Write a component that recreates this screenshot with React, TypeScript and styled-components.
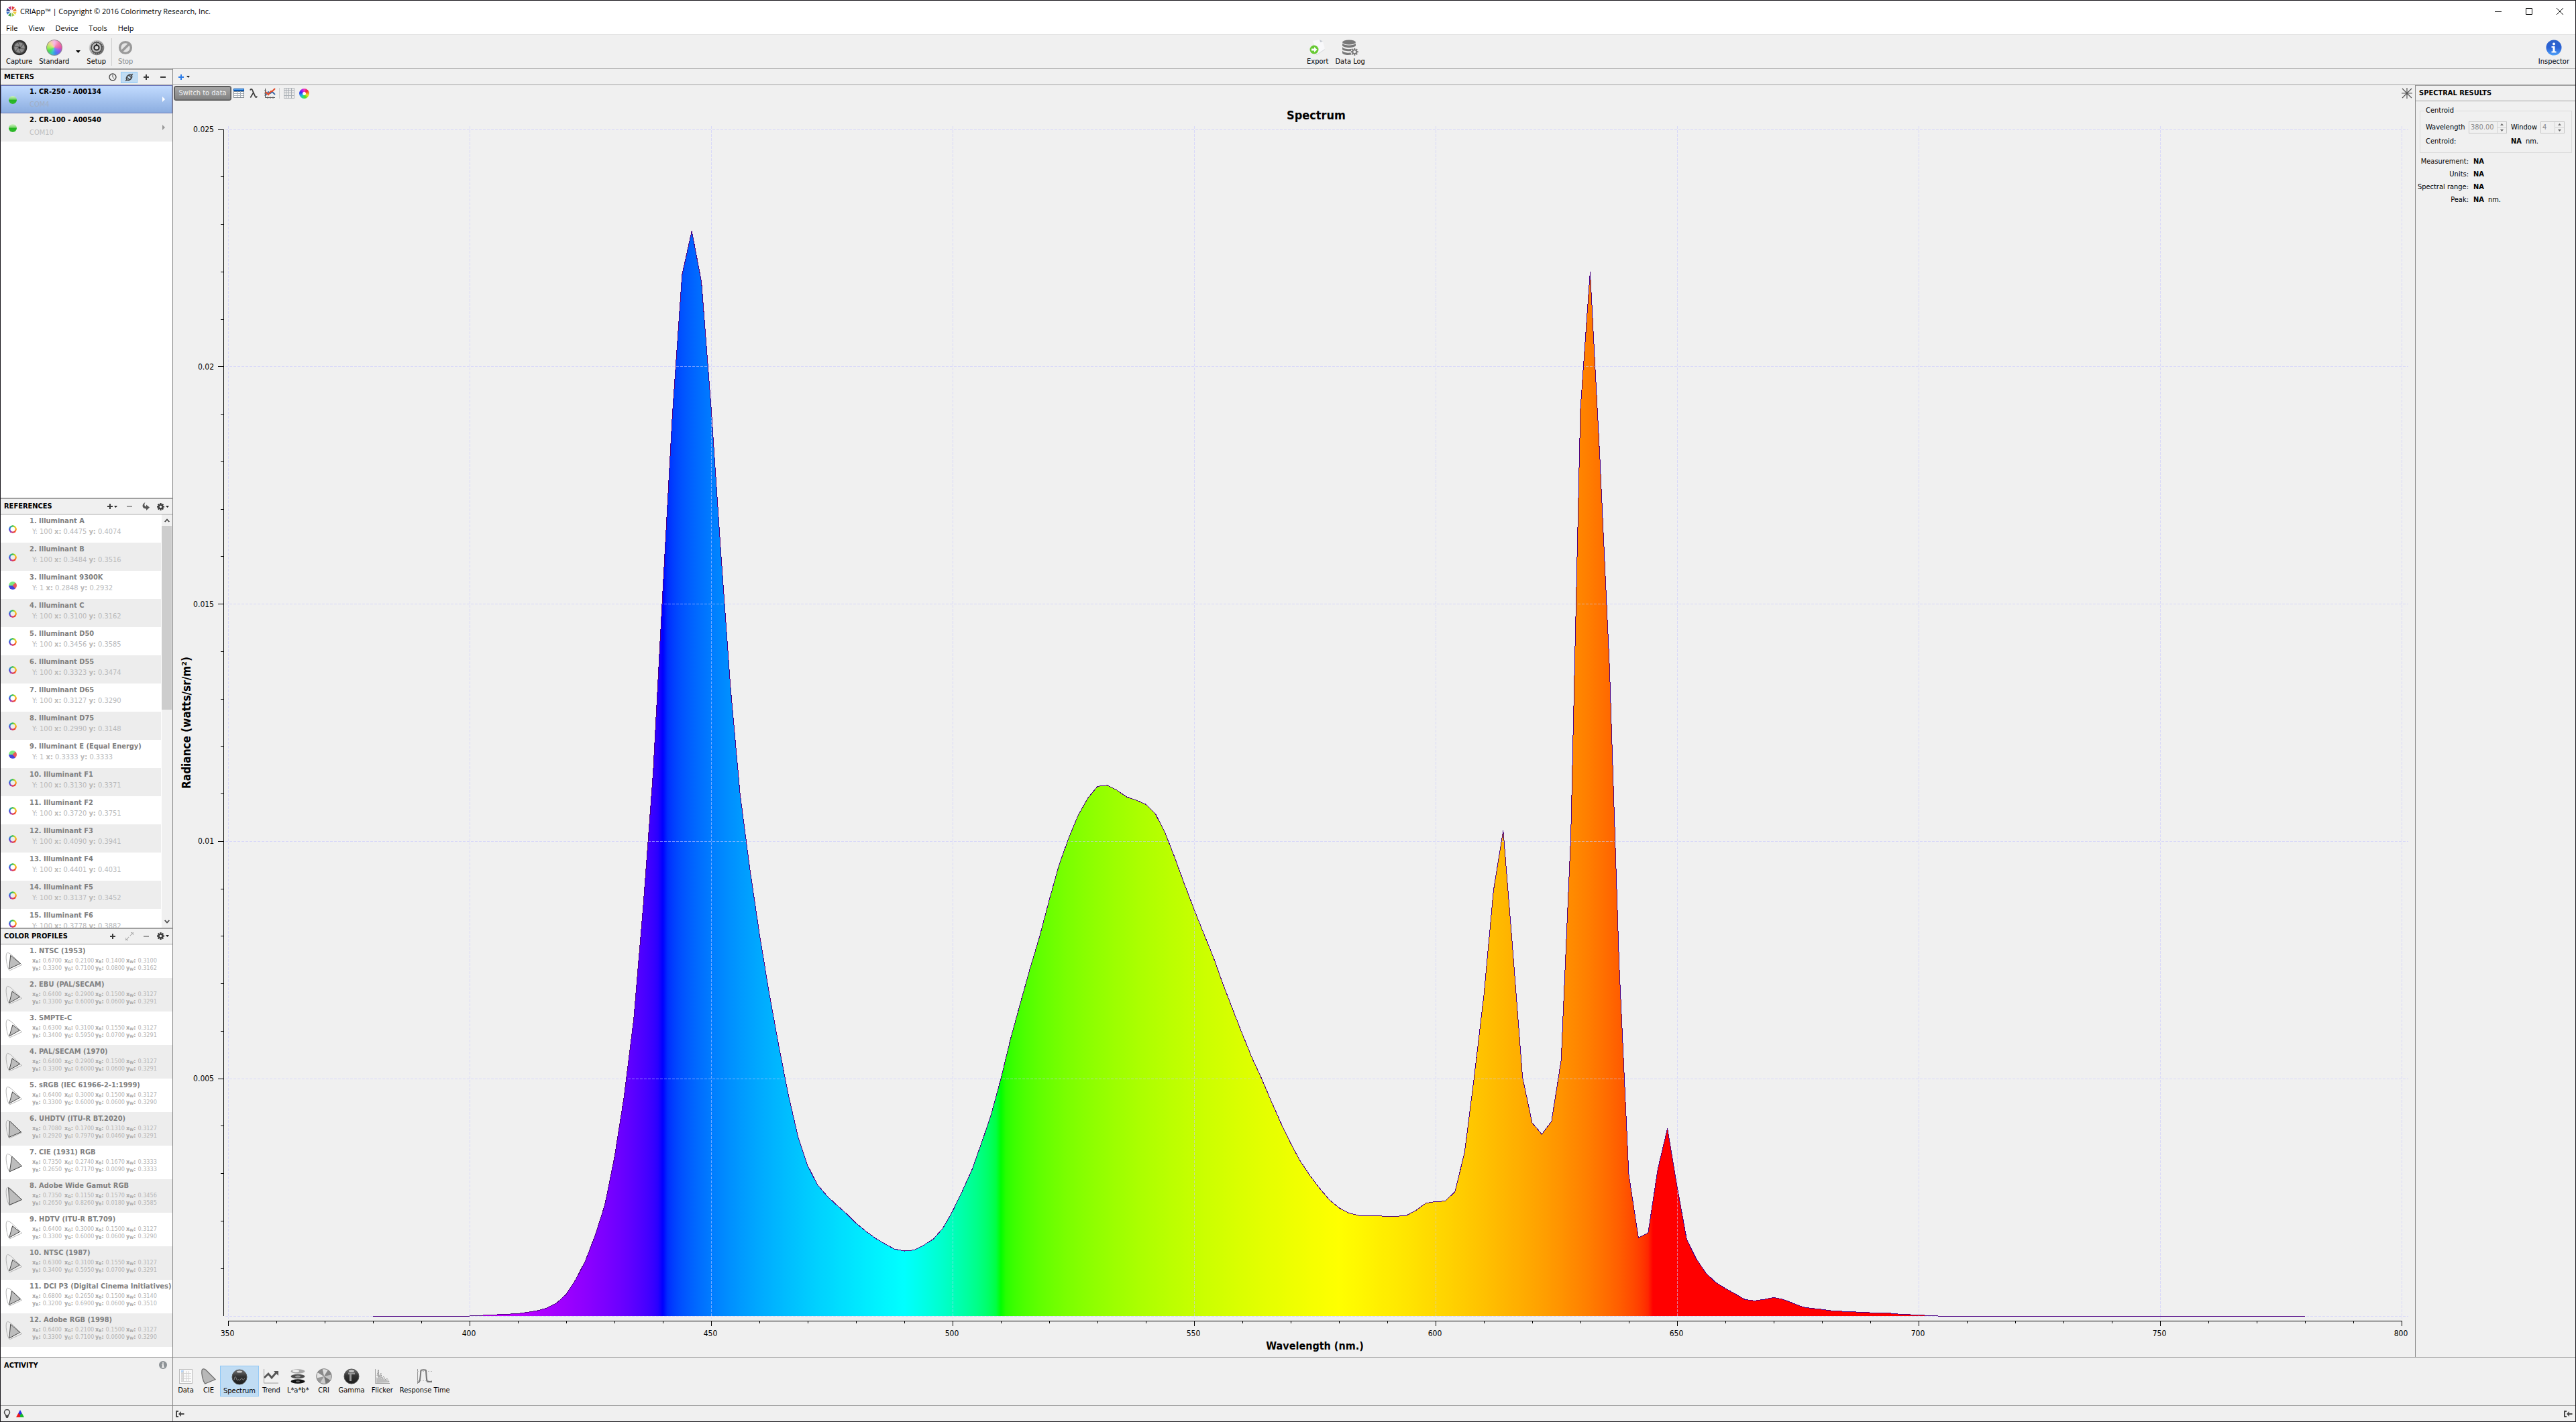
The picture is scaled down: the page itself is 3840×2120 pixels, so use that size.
import React, { useLayoutEffect, useRef, useState } from 'react';
import styled, { createGlobalStyle, css } from 'styled-components';

const UI = '"DejaVu Sans Condensed", "DejaVu Sans", Tahoma, sans-serif';
const SYS = '"Open Sans", "Noto Sans", "Segoe UI", sans-serif';
const FACE = '#f0f0f0';
const LINE = '#a0a0a0';
const SPLIT = '#868686';

const GlobalStyle = createGlobalStyle`
  *, *::before, *::after { box-sizing: border-box; }
  html, body { margin: 0; padding: 0; background: ${FACE}; }
  body { font-family: ${UI}; font-size: 11px; line-height: 14px; color: #000; }
  button { font: inherit; color: inherit; background: none; border: 0; padding: 0; margin: 0; }
  ul { list-style: none; margin: 0; padding: 0; }
  svg { display: block; flex: none; }
`;

/* ---------- window frame ---------- */

const Window = styled.div`
  display: flex;
  flex-direction: column;
  height: 100vh;
  border: 1px solid #17151a;
  background: ${FACE};
  overflow: hidden;
`;

const TitleBar = styled.header`
  display: flex;
  align-items: center;
  flex: none;
  height: 31px;
  padding-left: 8px;
  background: #fff;
  font-family: ${SYS};
`;

const AppTitle = styled.h1`
  flex: 1;
  margin: 0 0 0 5px;
  font-size: 11px;
  font-weight: 400;
`;

const CaptionButton = styled.button`
  display: grid;
  place-items: center;
  width: 46px;
  height: 28px;
`;

const MenuBar = styled.nav`
  display: flex;
  flex: none;
  height: 20px;
  background: #fff;
  border-bottom: 1px solid #e3e3e3;
  font-family: ${SYS};
`;

const MenuItem = styled.button`
  padding: 0 8px;
`;

const Toolbar = styled.div`
  display: flex;
  flex: none;
  height: 50px;
  padding: 0 4px 0 3px;
`;

const Spacer = styled.div`
  flex: 1;
`;

const ToolButton = styled.button<{ $dim?: boolean }>`
  display: flex;
  flex-direction: column;
  align-items: center;
  gap: 2px;
  padding: 7px 5px 0;
  color: ${p => (p.$dim ? '#868686' : '#000')};
`;

const DropArrow = styled.button`
  display: grid;
  place-items: center;
  width: 16px;
`;

const Divider = styled.span<{ $height: number }>`
  align-self: center;
  width: 1px;
  height: ${p => p.$height}px;
  background: #cfcfcf;
  margin: 0 3px;
`;

const Body = styled.div`
  display: flex;
  flex: 1;
  min-height: 0;
`;

/* ---------- left column ---------- */

const Sidebar = styled.aside`
  display: flex;
  flex-direction: column;
  flex: none;
  width: 257px;
  border-right: 1px solid ${SPLIT};
`;

const Section = styled.section`
  display: flex;
  flex-direction: column;
  flex: 1;
  min-height: 0;
`;

const SectionHead = styled.div`
  display: flex;
  align-items: center;
  flex: none;
  height: 25px;
  padding: 0 2px 0 5px;
  border-top: 2px solid ${LINE};
  border-bottom: 1px solid ${LINE};
`;

const SectionTitle = styled.h2`
  flex: 1;
  margin: 0;
  font-size: 11px;
  font-weight: 700;
`;

const HeadButton = styled.button<{ $on?: boolean; $dim?: boolean }>`
  display: flex;
  align-items: center;
  justify-content: center;
  gap: 2px;
  width: 25px;
  height: 17px;
  color: ${p => (p.$dim ? '#9a9a9a' : '#3c3c3c')};
  ${p => p.$on && css`
    background: #c0dcf3;
    border: 1px solid #90c8f6;
  `}
`;

const Scroller = styled.div`
  display: flex;
  flex: 1;
  min-height: 0;
  background: #fff;
`;

const List = styled.ul`
  flex: 1;
  min-width: 0;
  overflow: hidden;
`;

const Row = styled.li<{ $height: number; $shade?: boolean; $selected?: boolean }>`
  display: flex;
  height: ${p => p.$height}px;
  background: ${p => (p.$shade ? '#ededed' : '#fff')};
  ${p => p.$selected && css`
    background: linear-gradient(#c3dcff, #8aacdf);
    box-shadow: inset 0 0 0 1px #6b76b8;
  `}
`;

const RowIcon = styled.span`
  display: flex;
  justify-content: center;
  flex: none;
  width: 43px;
  padding: 16px 7px 0 0;
`;

const ProfileIcon = styled.span`
  flex: none;
  width: 43px;
  padding: 11px 0 0 7px;
`;

const RowText = styled.div<{ $sub: number }>`
  flex: 1;
  min-width: 0;
  padding-top: 3px;
  white-space: nowrap;
  display: flex;
  flex-direction: column;
  gap: ${p => p.$sub}px;
`;

const Name = styled.strong<{ $active?: boolean }>`
  color: ${p => (p.$active ? '#000' : '#808080')};
`;

const Port = styled.span<{ $selected?: boolean }>`
  color: ${p => (p.$selected ? '#a0aec4' : '#c0c0c0')};
`;

const Coords = styled.span`
  padding-left: 4px;
  color: #b9b9b9;
`;

const RowArrow = styled.span`
  display: grid;
  place-items: center;
  width: 26px;
`;

const ScrollTrack = styled.div`
  display: flex;
  flex-direction: column;
  flex: none;
  width: 16px;
  margin: 0 0 0 1px;
  background: #f0f0f0;
`;

const ScrollButton = styled.button`
  display: grid;
  place-items: center;
  flex: none;
  height: 17px;
`;

const ScrollThumb = styled.div`
  height: 47%;
  margin-right: 1px;
  background: #cdcdcd;
`;

const ScrollRest = styled.div`
  flex: 1;
`;

const Primaries = styled.span`
  display: grid;
  grid-template-columns: 48px 46px 46px 47px;
  padding-left: 4px;
  font-size: 9px;
  line-height: 11px;
  color: #b5b5b5;
`;

const Primary = styled.span`
  display: flex;
  gap: 3px;
  b { color: #a8a8a8; }
  sub { font-size: 6px; line-height: 0; vertical-align: -1px; }
`;

const Ball = styled.i`
  width: 12px;
  height: 12px;
  border-radius: 50%;
  background: linear-gradient(#c9f0bd 5%, #77d468 42%, #22b520 52%, #35b92f);
`;

const Ring = styled.i`
  width: 12px;
  height: 12px;
  border-radius: 50%;
  background: conic-gradient(#3ec43c, #e8d820, #f89a20, #f04028 40%, #e03858 50%, #9040c0 62%, #3a50e0 75%, #20a0b0 88%, #3ec43c);
  mask: radial-gradient(circle, transparent 3px, #000 4px);
`;

const Pie = styled.i`
  width: 12px;
  height: 12px;
  border-radius: 50%;
  background: conic-gradient(#7de87d 0 12%, #e85a5a 12% 40%, #4444dd 40% 75%, #7de87d 75%);
`;

const Activity = styled.section`
  display: flex;
  flex: none;
  height: 72px;
  padding: 5px 8px 0 5px;
  border-top: 1px solid ${LINE};
`;

const StatusBar = styled.footer`
  display: flex;
  align-items: center;
  gap: 8px;
  flex: none;
  height: 24px;
  padding: 0 4px;
  border-top: 1px solid ${LINE};
`;

/* ---------- centre ---------- */

const Main = styled.main`
  display: flex;
  flex-direction: column;
  flex: 1;
  min-width: 0;
`;

const TabStrip = styled.div`
  display: flex;
  align-items: center;
  flex: none;
  height: 25px;
  border-top: 1px solid ${LINE};
  border-bottom: 1px solid ${LINE};
`;

const AddView = styled.button`
  display: flex;
  align-items: center;
  gap: 4px;
  padding: 0 8px;
`;

const Work = styled.div`
  display: flex;
  flex: 1;
  min-height: 0;
`;

const ChartPane = styled.section`
  display: flex;
  flex-direction: column;
  flex: 1;
  min-width: 0;
`;

const ChartTools = styled.div`
  display: flex;
  align-items: center;
  flex: none;
  height: 24px;
  padding: 0 4px 0 1px;
`;

const DataTip = styled.button`
  height: 22px;
  width: 86px;
  border: 1px solid #4f4f4f;
  border-radius: 3px;
  background: linear-gradient(#a9a9a9, #808080);
  box-shadow: inset 0 0 0 1px #6a6a6a;
  color: #f2f2f2;
`;

const ChartTool = styled.button`
  display: grid;
  place-items: center;
  width: 22px;
  height: 22px;
`;

const Gap = styled.span`
  width: 2px;
`;

const Wheel = styled.i<{ $size: number; $hole?: boolean }>`
  display: block;
  width: ${p => p.$size}px;
  height: ${p => p.$size}px;
  border-radius: 50%;
  ${p => (p.$hole ? css`
    background:
      radial-gradient(circle, #fff 0 2px, transparent 3px),
      conic-gradient(#f040c0, #f02040 12%, #f08020 22%, #f0e020 32%, #50e020 45%, #20d8a0 58%, #20a0f0 68%, #3030f0 80%, #b020f0 92%, #f040c0);
  ` : css`
    background:
      radial-gradient(circle at 50% 20%, rgba(255,255,255,.5), rgba(255,255,255,.1) 65%),
      conic-gradient(#f078d0, #f04080 12%, #e03090 24%, #8040f0 34%, #3070f0 46%, #20c0c0 56%, #30d840 66%, #90e830 76%, #f0c060 88%, #f078d0);
    box-shadow: inset 0 0 0 1px #8a8a8a;
  `)}
`;

const Plot = styled.div`
  flex: 1;
  min-height: 0;
  overflow: hidden;
`;

const ViewTabs = styled.nav`
  display: flex;
  align-items: center;
  flex: none;
  height: 72px;
  padding: 0 2px 1px;
  border-top: 1px solid ${LINE};
`;

const ViewTab = styled.button<{ $on?: boolean }>`
  display: flex;
  flex-direction: column;
  align-items: center;
  gap: 2px;
  min-width: 32px;
  height: 46px;
  padding: 3px 4px 0;
  border: 1px solid transparent;
  ${p => p.$on && css`
    background: #c0dcf3;
    border-color: #90c8f6;
    padding-top: 4px;
  `}
`;

/* ---------- inspector ---------- */

const Inspector = styled.aside`
  flex: none;
  width: 239px;
  border-left: 1px solid ${SPLIT};
`;

const InspectorHead = styled.div`
  display: flex;
  align-items: center;
  height: 24px;
  padding: 0 5px;
  border-top: 1px solid ${LINE};
  border-bottom: 1px solid ${LINE};
`;

const Group = styled.fieldset`
  margin: 7px 5px 0 6px;
  padding: 7px 8px 6px;
  border: 1px solid #dcdcdc;
  legend { padding: 0 2px; margin-left: -2px; }
`;

const GroupRow = styled.div`
  display: grid;
  grid-template-columns: 64px 63px 44px 36px;
  align-items: center;
  height: 21px;
`;

const NoWrap = styled.span`
  white-space: nowrap;
`;

const SpinBox = styled.span`
  display: flex;
  width: 100%;
  max-width: 57px;
  height: 18px;
  border: 1px solid #c8c8c8;
  background: ${FACE};
`;

const SpinInput = styled.input`
  flex: 1;
  min-width: 0;
  width: 0;
  border: 0;
  padding: 0 0 0 2px;
  background: transparent;
  color: #8a8a8a;
  font: inherit;
`;

const SpinArrows = styled.span`
  display: flex;
  flex-direction: column;
  width: 14px;
  border-left: 1px solid #d4d4d4;
  button { display: grid; place-items: center; height: 8px; }
  button + button { border-top: 1px solid #d4d4d4; }
`;

const Facts = styled.dl`
  display: grid;
  grid-template-columns: 79px 1fr;
  column-gap: 7px;
  row-gap: 5px;
  margin: 6px 0 0;
  dt { display: flex; justify-content: flex-end; white-space: nowrap; }
  dd { margin: 0; }
`;

const Unit = styled.span`
  margin-left: 6px;
`;

/* ---------- icons ---------- */

const Caret = () => (
  <svg width="5" height="3" viewBox="0 0 5 3"><path d="M0 0h5L2.500 3z" fill="#222" /></svg>
);

const Plus = ({ color = 'currentColor' }: { color?: string }) => (
  <svg width="8" height="8" viewBox="0 0 8 8"><path d="M3 0h2v3h3v2H5v3H3V5H0V3h3z" fill={color} /></svg>
);

const Minus = () => (
  <svg width="8" height="8" viewBox="0 0 8 8"><path d="M0 3h8v2H0z" fill="currentColor" /></svg>
);

const Gear = () => (
  <svg width="11" height="11" viewBox="-6 -6 12 12">
    <g fill="#3c3c3c">
      {[0, 45, 90, 135].map(a => (
        <rect key={a} x="-1.300" y="-6" width="2.600" height="12" transform={`rotate(${a})`} />
      ))}
      <circle r="4.200" />
    </g>
    <circle r="1.900" fill={FACE} />
  </svg>
);

const Clock = () => (
  <svg width="12" height="12" viewBox="0 0 12 12" fill="none" stroke="#444">
    <circle cx="6" cy="6" r="5" strokeWidth="1.300" /><path d="M6 2.500V6l2.200 2.200" />
  </svg>
);

const Link = () => (
  <svg width="13" height="13" viewBox="0 0 13 13">
    <g transform="rotate(-45 6.500 6.500)">
      <ellipse cx="6.500" cy="6.500" rx="4.800" ry="3.200" fill="none" stroke="#444" strokeWidth="1.800" />
      <path d="M4.500 4v5M8.500 4v5" stroke="#444" strokeWidth="1.400" />
      <path d="M-1 6.500h2.500M11.500 6.500H14" stroke="#444" strokeWidth="1.600" />
    </g>
  </svg>
);

const CurveArrow = () => (
  <svg width="11" height="12" viewBox="0 0 11 12">
    <path d="M4.500 0C-1 2.500-1 9 6 9.500V12l5-4.500L6 3.500V6C3 6 2.500 3 4.500 0z" fill="#555" />
  </svg>
);

const Expand = () => (
  <svg width="12" height="12" viewBox="0 0 12 12" fill="none" stroke="#a4a4a4">
    <path d="M8 .5h3.500V4M11.500.5L7 5M4 11.500H.5V8M.5 11.500L5 7" strokeDasharray="2 .7" strokeWidth="1.300" />
  </svg>
);

const AppLogo = () => (
  <svg width="16" height="16" viewBox="-8 -8 16 16">
    {['#e03a3a', '#f07a2a', '#f0d040', '#a0c840', '#3a9a4a', '#3a78c8', '#28388a', '#c02878'].map((c, i) => (
      <path key={c} d="M.4-1.600L3.400-7-1.200-7.600z" fill={c} transform={`rotate(${i * 45 + 15})`} />
    ))}
  </svg>
);

const Shutter = () => (
  <svg width="24" height="24" viewBox="-12 -12 24 24">
    <circle r="11.300" fill="#2b2b2b" /><circle r="9.600" fill="#484848" /><circle r="7.800" fill="#8d8d8d" />
    {[0, 60, 120, 180, 240, 300].map(a => (
      <path key={a} d="M1-1L-2-7.600" stroke="#555" strokeWidth=".9" transform={`rotate(${a})`} />
    ))}
    <circle r="1.600" fill="#222" />
  </svg>
);

const Dial = () => (
  <svg width="24" height="24" viewBox="-12 -12 24 24">
    <defs>
      <linearGradient id="dial" x1="0" y1="0" x2="1" y2="1">
        <stop offset="0" stopColor="#eee" /><stop offset=".5" stopColor="#aaa" /><stop offset="1" stopColor="#555" />
      </linearGradient>
    </defs>
    <circle r="11.300" fill="url(#dial)" />
    <circle r="7.800" fill="#bbb" stroke="#4a4a4a" strokeWidth="1.300" />
    <circle r="9" fill="none" stroke="#444" strokeWidth="1.500" strokeDasharray="1 2" />
    <circle r="3.600" fill="#ddd" stroke="#222" strokeWidth="2" /><path d="M0-6v3" stroke="#222" strokeWidth="2" />
  </svg>
);

const StopIcon = () => (
  <svg width="24" height="24" viewBox="-12 -12 24 24">
    <circle r="8.400" fill="#e4e4e4" stroke="#9a9a9a" strokeWidth="3.400" />
    <path d="M-5.600 5.600L5.600-5.600" stroke="#9a9a9a" strokeWidth="3.600" />
  </svg>
);

const ExportIcon = () => (
  <svg width="24" height="24" viewBox="0 0 24 24">
    <path d="M7 3l11-2 5 14-12 8L4 16z" fill="#d4d7dc" /><path d="M5 2l10-2 5 3 3 11-12 8z" fill="#f8f8fa" />
    <path d="M15 0l1 4 4-1z" fill="#c6cad2" />
    <circle cx="7" cy="15" r="6.500" fill="#68c934" />
    <path d="M3 13.500h4V11l4.500 4L7 19v-2.500H3z" fill="#fff" />
  </svg>
);

const Database = () => (
  <svg width="24" height="24" viewBox="0 0 24 24">
    <g fill="#787878">
      <ellipse cx="10" cy="4" rx="10" ry="3.500" />
      <path d="M0 5.500c2 4 18 4 20 0V9c-2 4-18 4-20 0z" />
      <path d="M0 11c2 4 15 4 18 1.500l-4 4.500C8 17.500 1 17 0 14.500z" />
      <path d="M0 16.500c2 3 8 3.500 12.500 3l1 3C8 23.500 1 23 0 20z" />
    </g>
    <svg x="12.500" y="12.500" width="11.500" height="11.500" viewBox="-6 -6 12 12">
      <circle r="6" fill={FACE} />
      {[0, 45, 90, 135].map(a => (
        <rect key={a} x="-1.100" y="-5.800" width="2.200" height="11.600" fill="#787878" transform={`rotate(${a})`} />
      ))}
      <circle r="4" fill="#787878" /><circle r="2" fill={FACE} />
    </svg>
  </svg>
);

const InfoIcon = () => (
  <svg width="24" height="24" viewBox="-12 -12 24 24">
    <defs>
      <linearGradient id="info" x1="0" y1="0" x2="0" y2="1">
        <stop offset="0" stopColor="#2e62c8" /><stop offset=".5" stopColor="#2a62d6" /><stop offset="1" stopColor="#4fa0f8" />
      </linearGradient>
    </defs>
    <circle r="11.500" fill="url(#info)" />
    <circle cy="-5.500" r="2" fill="#fff" />
    <path d="M-3.500-2h5v7.500h2V7.500h-7V5.500h2V0h-2z" fill="#fff" />
  </svg>
);

const InfoSmall = () => (
  <svg width="12" height="12" viewBox="-6 -6 12 12">
    <circle r="6" fill="#8d9296" /><circle cy="-2.800" r="1.100" fill="#eee" /><path d="M-1.800-1H1v3.500h1V4h-4V2.500h1V.3h-.8z" fill="#eee" />
  </svg>
);

const TableIcon = () => (
  <svg width="16" height="14" viewBox="0 0 16 14" shapeRendering="crispEdges">
    <rect width="16" height="14" fill="#7f8890" /><rect x="1" y="5" width="14" height="8" fill="#fff" />
    <rect width="16" height="4" fill="#0a56b0" /><rect x="1" y="1" width="14" height="1" fill="#5aa4ee" />
    <path d="M1 7.500h14M1 10.500h14M5.500 4v9M10.500 4v9" stroke="#a8b0b8" />
  </svg>
);

const Lambda = () => (
  <svg width="12" height="14" viewBox="0 0 12 14" fill="none" stroke="#3a3a3a">
    <path d="M1 2.500C1.500.5 3.500.3 4.300 2.500L8.500 12c.7 1.500 2 1.500 2.600-.5" strokeWidth="1.800" />
    <path d="M5.800 6L1.300 13.500" strokeWidth="1.600" />
  </svg>
);

const LinesIcon = () => (
  <svg width="17" height="16" viewBox="0 0 17 16" fill="none">
    <path d="M1.500 1v13.500H16" stroke="#555" /><path d="M0 4h3M0 8h3M0 11h3M5 13v3M9 13v3M13 13v3" stroke="#666" />
    <path d="M2 11l4-5 3 2 3-2 4 4" stroke="#3f6ca8" strokeWidth="2" />
    <path d="M2 6l4 4 4-5h2l4-4" stroke="#e2502e" strokeWidth="2.200" />
  </svg>
);

const GridIcon = () => (
  <svg width="16" height="16" viewBox="0 0 16 16" shapeRendering="crispEdges">
    <rect x=".5" y=".5" width="15" height="15" fill="#ececec" stroke="#b4b8bc" />
    <path d="M3.500 0v16M7.500 0v16M11.500 0v16M0 3.500h16M0 7.500h16M0 11.500h16" stroke="#a8aeb4" />
  </svg>
);

const Asterisk = () => (
  <svg width="16" height="16" viewBox="0 0 16 16" stroke="#555" strokeWidth="1.200">
    <path d="M8 0v16M0 8h16M1 1l14 14M15 1L1 15" />
  </svg>
);

const DockIcon = () => (
  <svg width="13" height="12" viewBox="0 0 13 12" fill="#484848">
    <path d="M0 1h4v2H2v6h2v2H0z" /><path d="M4 6l4-4v3h4.500v2H8v3z" />
  </svg>
);

const Bulb = () => (
  <svg width="11" height="13" viewBox="0 0 11 13">
    <path d="M3.800 9.500C3.800 8 1.500 7 1.500 4.500a4 4 0 018 0C9.500 7 7.200 8 7.200 9.500z" fill="none" stroke="#444" strokeWidth="1.500" />
    <path d="M3.500 9.500h4v2l-1 1.500h-2l-1-1.500z" fill="#444" />
  </svg>
);

const Gamut = () => (
  <svg width="12" height="11" viewBox="0 0 12 11">
    <path d="M6 0L3 5.500 6 8l3-2.500z" fill="#2a30e8" /><path d="M3.200 5L0 11h6V7.500z" fill="#f01818" />
    <path d="M8.800 5L12 11H6V7.500z" fill="#18b828" />
  </svg>
);

const Sphere = ({ id, children }: { id: string; children: React.ReactNode }) => (
  <svg width="24" height="24" viewBox="-12 -12 24 24">
    <defs>
      <linearGradient id={id} x1="0" y1="0" x2="0" y2="1">
        <stop offset="0" stopColor="#777" /><stop offset=".45" stopColor="#333" /><stop offset="1" stopColor="#1c1c1c" />
      </linearGradient>
    </defs>
    <circle r="11" fill={`url(#${id})`} stroke="#555" />
    <ellipse cy="-8" rx="4" ry="1.500" fill="#ccc" />
    {children}
  </svg>
);

const viewIcons: Record<string, React.ReactNode> = {
  Data: (
    <svg width="24" height="24" viewBox="0 0 24 24">
      <rect x="2.500" y="1.500" width="19" height="21" fill="#fafafa" stroke="#bdbdbd" />
      <rect x="5" y="4" width="3" height="16" fill="#dcdcdc" /><rect x="5" y="3" width="4" height="3" fill="#b4d4f8" />
      <path d="M5 7.500h15M5 11.500h15M5 15.500h15M5 19.500h15M8.500 4v16M12.500 4v16M16.500 4v16" stroke="#d2d2d2" />
    </svg>
  ),
  CIE: (
    <svg width="24" height="24" viewBox="0 0 24 24">
      <path d="M2 2.500C3 0 6 .5 8 2.500L22 16.500 6.500 23C3 18 1 8 2 2.500z" fill="#b8b8b8" stroke="#6c6c6c" strokeWidth="1.200" />
    </svg>
  ),
  Spectrum: (
    <Sphere id="spectrumBall">
      <path d="M-8 4c2-9 3-2 4 0s2-1 3 0 2 1 3-1 2-1 3 1 2-2 3-2" fill="none" stroke="#9a9a9a" strokeWidth=".9" />
    </Sphere>
  ),
  Trend: (
    <svg width="24" height="24" viewBox="0 0 24 24" fill="none">
      <path d="M1.500 1v21H23" stroke="#9a9a9a" /><path d="M2 14l6-6 5 6 7-8" stroke="#555" strokeWidth="2.800" /><path d="M16 4h7v7z" fill="#555" />
    </svg>
  ),
  'L*a*b*': (
    <svg width="24" height="24" viewBox="0 0 24 24">
      <ellipse cx="12" cy="4.500" rx="10.500" ry="3.200" fill="#a8a8a8" /><ellipse cx="9" cy="4" rx="5" ry="1.700" fill="#f4f4f4" />
      <ellipse cx="12" cy="12" rx="10.500" ry="3.200" fill="#4c4c4c" /><ellipse cx="12" cy="12" rx="4" ry="1.600" fill="#999" />
      <ellipse cx="12" cy="19.500" rx="10.500" ry="3.200" fill="#111" /><ellipse cx="12" cy="19.500" rx="3" ry="1.300" fill="#666" />
    </svg>
  ),
  CRI: (
    <svg width="24" height="24" viewBox="-12 -12 24 24">
      <circle r="11.500" fill="#9a9a9a" />
      {['#ddd', '#888', '#c4c4c4', '#777', '#ccc', '#999', '#e4e4e4', '#8a8a8a'].map((c, i) => (
        <path key={i} d="M0 0L-2.500-11A11.300 11.300 0 016-9.600z" fill={c} transform={`rotate(${i * 45})`} />
      ))}
      <circle r="11.300" fill="none" stroke="#8a8a8a" />
    </svg>
  ),
  Gamma: (
    <Sphere id="gammaBall">
      <path d="M-5-5.500H5v2.500H0V7h-3V-3h-2z" fill="#999" />
    </Sphere>
  ),
  Flicker: (
    <svg width="24" height="24" viewBox="0 0 24 24">
      <path d="M1.500 1v21.500H23" fill="none" stroke="#a4a4a4" />
      <path d="M3 22v-9l2 2V4l1.500-2 1 12 2-6 1 8 2-3 2 4 3-1 5 5z" fill="#bdbdbd" />
      <path d="M4 11l2-9 1 11 3-6 1 8 3-3 2 5 3-2 3 5" fill="none" stroke="#888" strokeDasharray="1.500 1" />
    </svg>
  ),
  'Response Time': (
    <svg width="24" height="24" viewBox="0 0 24 24" fill="none">
      <path d="M1.500 1v22" stroke="#999" /><path d="M1 4.500h22M1 18.500h22" stroke="#b8b8b8" strokeDasharray="2 2" />
      <path d="M2 21c3 0 3-3 4.500-18 0-1 7-1 7.500 0 1 15 1 17 3 17h6" stroke="#777" strokeWidth="2" />
    </svg>
  ),
};

/* Spectral locus of the CIE 1931 diagram, reduced to icon detail. */
const LOCUS = [
  [0.174, 0.005], [0.144, 0.03], [0.11, 0.087], [0.069, 0.2], [0.045, 0.295], [0.023, 0.413], [0.008, 0.538],
  [0.004, 0.655], [0.014, 0.75], [0.039, 0.812], [0.074, 0.834], [0.155, 0.806], [0.23, 0.754], [0.302, 0.692],
  [0.373, 0.625], [0.444, 0.555], [0.513, 0.487], [0.575, 0.424], [0.627, 0.373], [0.735, 0.265],
];

const GamutThumb = ({ x, y }: { x: string[]; y: string[] }) => {
  const pt = (px: number, py: number) => `${px * 32},${27 - py * 32}`;
  return (
    <svg width="26" height="30" viewBox="-1 -1 26 30">
      <polygon points={LOCUS.map(([a, b]) => pt(a, b)).join(' ')} fill="none" stroke="#9a9a9a" strokeWidth=".7" />
      <polygon points={[0, 1, 2].map(i => pt(+x[i], +y[i])).join(' ')} fill="#bdbdbd" stroke="#444" />
    </svg>
  );
};

/* ---------- data ---------- */

const illuminants: [string, string, string, string][] = [
  ['Illuminant A', '100', '0.4475', '0.4074'],
  ['Illuminant B', '100', '0.3484', '0.3516'],
  ['Illuminant 9300K', '1', '0.2848', '0.2932'],
  ['Illuminant C', '100', '0.3100', '0.3162'],
  ['Illuminant D50', '100', '0.3456', '0.3585'],
  ['Illuminant D55', '100', '0.3323', '0.3474'],
  ['Illuminant D65', '100', '0.3127', '0.3290'],
  ['Illuminant D75', '100', '0.2990', '0.3148'],
  ['Illuminant E (Equal Energy)', '1', '0.3333', '0.3333'],
  ['Illuminant F1', '100', '0.3130', '0.3371'],
  ['Illuminant F2', '100', '0.3720', '0.3751'],
  ['Illuminant F3', '100', '0.4090', '0.3941'],
  ['Illuminant F4', '100', '0.4401', '0.4031'],
  ['Illuminant F5', '100', '0.3137', '0.3452'],
  ['Illuminant F6', '100', '0.3778', '0.3882'],
];

const profiles: [string, string, string][] = [
  ['NTSC (1953)', '0.6700 0.2100 0.1400 0.3100', '0.3300 0.7100 0.0800 0.3162'],
  ['EBU (PAL/SECAM)', '0.6400 0.2900 0.1500 0.3127', '0.3300 0.6000 0.0600 0.3291'],
  ['SMPTE-C', '0.6300 0.3100 0.1550 0.3127', '0.3400 0.5950 0.0700 0.3291'],
  ['PAL/SECAM (1970)', '0.6400 0.2900 0.1500 0.3127', '0.3300 0.6000 0.0600 0.3291'],
  ['sRGB (IEC 61966-2-1:1999)', '0.6400 0.3000 0.1500 0.3127', '0.3300 0.6000 0.0600 0.3290'],
  ['UHDTV (ITU-R BT.2020)', '0.7080 0.1700 0.1310 0.3127', '0.2920 0.7970 0.0460 0.3291'],
  ['CIE (1931) RGB', '0.7350 0.2740 0.1670 0.3333', '0.2650 0.7170 0.0090 0.3333'],
  ['Adobe Wide Gamut RGB', '0.7350 0.1150 0.1570 0.3456', '0.2650 0.8260 0.0180 0.3585'],
  ['HDTV (ITU-R BT.709)', '0.6400 0.3000 0.1500 0.3127', '0.3300 0.6000 0.0600 0.3290'],
  ['NTSC (1987)', '0.6300 0.3100 0.1550 0.3127', '0.3400 0.5950 0.0700 0.3291'],
  ['DCI P3 (Digital Cinema Initiatives)', '0.6800 0.2650 0.1500 0.3140', '0.3200 0.6900 0.0600 0.3510'],
  ['Adobe RGB (1998)', '0.6400 0.2100 0.1500 0.3127', '0.3300 0.7100 0.0600 0.3290'],
];

/* Radiance in 1e-5 W/sr/m², every 2 nm from 400 nm. */
const RADIANCE = [
  0, 1, 2, 3, 4, 5, 8, 11, 17, 27, 46, 77, 117, 170, 234, 334, 463, 627, 869, 1144,
  1527, 1900, 2194, 2286, 2179, 1915, 1612, 1327, 1100, 944, 806, 682, 570, 466, 378, 317, 277, 253, 234, 216,
  196, 179, 164, 152, 141, 137, 139, 149, 162, 185, 221, 263, 308, 365, 425, 500, 584, 658, 731, 799,
  876, 949, 1006, 1055, 1091, 1116, 1118, 1108, 1094, 1087, 1078, 1058, 1018, 966, 910, 857, 806, 756, 699, 646,
  594, 544, 500, 452, 406, 364, 326, 296, 269, 245, 228, 217, 212, 211, 211, 210, 210, 212, 223, 238,
  241, 242, 262, 344, 504, 676, 897, 1023, 769, 503, 407, 383, 410, 539, 1010, 1912, 2200, 1811, 1370, 742,
  298, 165, 175, 309, 395, 273, 161, 120, 90, 71, 58, 47, 35, 32, 35, 39, 35, 27, 19, 16,
  14, 11, 10, 9, 8, 7, 7, 6, 4, 3, 2, 1, 0,
];

const wavelengthColor = (nm: number) => {
  let r = 0, g = 0, b = 0;
  if (nm < 440) { r = (440 - nm) / 60; b = 1; }
  else if (nm < 490) { g = (nm - 440) / 50; b = 1; }
  else if (nm < 510) { g = 1; b = (510 - nm) / 20; }
  else if (nm < 580) { r = (nm - 510) / 70; g = 1; }
  else if (nm < 645) { r = 1; g = (645 - nm) / 65; }
  else r = 1;
  const c = (v: number) => Math.round(255 * Math.pow(v, 0.45));
  return `rgb(${c(r)},${c(g)},${c(b)})`;
};

/* ---------- spectrum chart ---------- */

const useSize = () => {
  const ref = useRef<HTMLDivElement>(null);
  const [size, setSize] = useState({ w: 0, h: 0 });
  useLayoutEffect(() => {
    const el = ref.current;
    if (!el) return;
    const read = () => setSize({ w: el.clientWidth, h: el.clientHeight });
    read();
    const watcher = new ResizeObserver(read);
    watcher.observe(el);
    return () => watcher.disconnect();
  }, []);
  return { ref, ...size };
};

const range = (n: number) => Array.from({ length: n }, (_, i) => i);

const SpectrumChart = () => {
  const { ref, w, h } = useSize();
  const left = 82, right = w - 20, top = 42, bottom = h - 61;
  const px = (nm: number) => left + ((nm - 350) / 450) * (right - left);
  const py = (v: number) => bottom - (v / 2500) * (bottom - top);
  const curve = [`${px(380)},${py(0)}`, ...RADIANCE.map((v, i) => `${px(400 + i * 2)},${py(v)}`), `${px(780)},${py(0)}`].join(' ');
  const axis = left - 7;
  return (
    <Plot ref={ref}>
      {w > 0 && (
        <svg width={w} height={h} role="img" aria-label="Spectrum" fontFamily={UI} fontSize="12">
          <defs>
            <linearGradient id="spectrumFill" gradientUnits="userSpaceOnUse" x1={px(380)} x2={px(780)} y1="0" y2="0">
              {range(401).map(i => <stop key={i} offset={i / 400} stopColor={wavelengthColor(380 + i)} />)}
            </linearGradient>
          </defs>
          <text x={(left + right) / 2 + 2} y="27" textAnchor="middle" fontSize="18" fontWeight="700">Spectrum</text>
          <polygon points={curve} fill="url(#spectrumFill)" shapeRendering="crispEdges" />
          <g stroke="rgba(200,200,255,.6)" strokeDasharray="4 2" shapeRendering="crispEdges">
            {range(10).map(i => (
              <line key={i} x1={px(350 + i * 50)} x2={px(350 + i * 50)} y1={top - 5} y2={bottom + 4} />
            ))}
            {range(6).map(i => <line key={i} x1={left - 4} x2={right + 10} y1={py(i * 500)} y2={py(i * 500)} />)}
          </g>
          <polyline points={curve} fill="none" stroke="#4b0082" shapeRendering="crispEdges" />
          <g stroke="#000" shapeRendering="crispEdges">
            <path d={`M${axis} ${top}V${bottom}M${left} ${bottom + 7}H${right}`} fill="none" />
            {range(25).map(i => (
              <line key={i} x1={axis - (i % 5 === 4 ? 8 : 4)} x2={axis} y1={py(100 * (i + 1))} y2={py(100 * (i + 1))} />
            ))}
            {range(46).map(i => (
              <line key={i} x1={px(350 + i * 10)} x2={px(350 + i * 10)} y1={bottom + 7} y2={bottom + (i % 5 ? 11 : 15)} />
            ))}
          </g>
          {range(5).map(i => (
            <text key={i} x={axis - 14} y={py(500 * (i + 1)) + 4} textAnchor="end">{(i + 1) * 5 / 1000}</text>
          ))}
          {range(10).map(i => (
            <text key={i} x={px(350 + i * 50) - 1} y={bottom + 30} textAnchor="middle">{350 + i * 50}</text>
          ))}
          <text x={(left + right) / 2} y={bottom + 50} textAnchor="middle" fontSize="16" fontWeight="700">Wavelength (nm.)</text>
          <text transform={`translate(26 ${(top + bottom) / 2}) rotate(-90)`} textAnchor="middle" fontSize="17" fontWeight="700">
            Radiance (watts/sr/m²)
          </text>
        </svg>
      )}
    </Plot>
  );
};

/* ---------- parts ---------- */

const MeterRow = ({ n, name, port, selected }: { n: number; name: string; port: string; selected?: boolean }) => (
  <Row $height={42} $shade={!selected} $selected={selected}>
    <RowIcon><Ball /></RowIcon>
    <RowText $sub={5}>
      <Name $active>{n}. {name}</Name>
      <Port $selected={selected}>{port}</Port>
    </RowText>
    <RowArrow>
      <svg width="4" height="8" viewBox="0 0 4 8"><path d="M0 0l4 4-4 4z" fill={selected ? '#fff' : '#999'} /></svg>
    </RowArrow>
  </Row>
);

const PrimaryLine = ({ axis, values }: { axis: string; values: string[] }) => (
  <>
    {values.map((v, i) => (
      <Primary key={i}><b>{axis}<sub>{'RGBW'[i]}</sub>:</b><span>{v}</span></Primary>
    ))}
  </>
);

const Spin = ({ id, value }: { id: string; value: string }) => (
  <SpinBox>
    <SpinInput id={id} defaultValue={value} disabled />
    <SpinArrows>
      <button aria-label="Increase" disabled><svg width="5" height="3" viewBox="0 0 5 3"><path d="M0 3h5L2.500 0z" fill="#666" /></svg></button>
      <button aria-label="Decrease" disabled><svg width="5" height="3" viewBox="0 0 5 3"><path d="M0 0h5L2.500 3z" fill="#666" /></svg></button>
    </SpinArrows>
  </SpinBox>
);

export default function App() {
  return (
    <Window>
      <GlobalStyle />
      <TitleBar>
        <AppLogo />
        <AppTitle>CRIApp™ | Copyright © 2016 Colorimetry Research, Inc.</AppTitle>
        <CaptionButton aria-label="Minimize"><svg width="10" height="10" viewBox="0 0 10 10"><path d="M0 5.500h10" stroke="#000" /></svg></CaptionButton>
        <CaptionButton aria-label="Maximize"><svg width="10" height="10" viewBox="0 0 10 10"><path d="M.5.5h9v9h-9z" fill="none" stroke="#000" /></svg></CaptionButton>
        <CaptionButton aria-label="Close"><svg width="10" height="10" viewBox="0 0 10 10"><path d="M0 0l10 10M10 0L0 10" stroke="#000" /></svg></CaptionButton>
      </TitleBar>
      <MenuBar>
        {['File', 'View', 'Device', 'Tools', 'Help'].map(m => <MenuItem key={m}>{m}</MenuItem>)}
      </MenuBar>
      <Toolbar>
        <ToolButton><Shutter />Capture</ToolButton>
        <ToolButton><Wheel $size={24} />Standard</ToolButton>
        <DropArrow aria-label="Choose standard"><svg width="7" height="4" viewBox="0 0 7 4"><path d="M0 0h7L3.500 4z" /></svg></DropArrow>
        <ToolButton><Dial />Setup</ToolButton>
        <Divider $height={41} />
        <ToolButton $dim disabled><StopIcon />Stop</ToolButton>
        <Spacer />
        <ToolButton><ExportIcon />Export</ToolButton>
        <ToolButton><Database />Data Log</ToolButton>
        <Spacer />
        <ToolButton><InfoIcon />Inspector</ToolButton>
      </Toolbar>
      <Body>
        <Sidebar>
          <Section>
            <SectionHead>
              <SectionTitle>METERS</SectionTitle>
              <HeadButton aria-label="History"><Clock /></HeadButton>
              <HeadButton aria-label="Connect" $on><Link /></HeadButton>
              <HeadButton aria-label="Add meter"><Plus /></HeadButton>
              <HeadButton aria-label="Remove meter"><Minus /></HeadButton>
            </SectionHead>
            <Scroller>
              <List>
                <MeterRow n={1} name="CR-250 - A00134" port="COM4" selected />
                <MeterRow n={2} name="CR-100 - A00540" port="COM10" />
              </List>
            </Scroller>
          </Section>
          <Section>
            <SectionHead>
              <SectionTitle>REFERENCES</SectionTitle>
              <HeadButton aria-label="Add reference"><Plus /><Caret /></HeadButton>
              <HeadButton aria-label="Remove reference" $dim><Minus /></HeadButton>
              <HeadButton aria-label="Apply"><CurveArrow /></HeadButton>
              <HeadButton aria-label="Reference options"><Gear /><Caret /></HeadButton>
            </SectionHead>
            <Scroller>
              <List>
                {illuminants.map(([name, Y, x, y], i) => (
                  <Row key={name} $height={42} $shade={i % 2 === 1}>
                    <RowIcon>{Y === '1' ? <Pie /> : <Ring />}</RowIcon>
                    <RowText $sub={2}>
                      <Name>{i + 1}. {name}</Name>
                      <Coords>Y: {Y} <b>x:</b> {x} <b>y:</b> {y}</Coords>
                    </RowText>
                  </Row>
                ))}
              </List>
              <ScrollTrack>
                <ScrollButton aria-label="Scroll up"><svg width="8" height="6" viewBox="0 0 8 6"><path d="M.7 5L4 1.500 7.300 5" fill="none" stroke="#444" strokeWidth="1.800" /></svg></ScrollButton>
                <ScrollRest><ScrollThumb /></ScrollRest>
                <ScrollButton aria-label="Scroll down"><svg width="8" height="6" viewBox="0 0 8 6"><path d="M.7 1L4 4.500 7.300 1" fill="none" stroke="#444" strokeWidth="1.800" /></svg></ScrollButton>
              </ScrollTrack>
            </Scroller>
          </Section>
          <Section>
            <SectionHead>
              <SectionTitle>COLOR PROFILES</SectionTitle>
              <HeadButton aria-label="Add profile"><Plus /></HeadButton>
              <HeadButton aria-label="Expand"><Expand /></HeadButton>
              <HeadButton aria-label="Remove profile" $dim><Minus /></HeadButton>
              <HeadButton aria-label="Profile options"><Gear /><Caret /></HeadButton>
            </SectionHead>
            <Scroller>
              <List>
                {profiles.map(([name, xs, ys], i) => (
                  <Row key={name} $height={50} $shade={i % 2 === 1}>
                    <ProfileIcon><GamutThumb x={xs.split(' ')} y={ys.split(' ')} /></ProfileIcon>
                    <RowText $sub={2}>
                      <Name>{i + 1}. {name}</Name>
                      <Primaries>
                        <PrimaryLine axis="x" values={xs.split(' ')} />
                        <PrimaryLine axis="y" values={ys.split(' ')} />
                      </Primaries>
                    </RowText>
                  </Row>
                ))}
              </List>
            </Scroller>
          </Section>
          <Activity>
            <SectionTitle>ACTIVITY</SectionTitle>
            <InfoSmall />
          </Activity>
          <StatusBar><Bulb /><Gamut /></StatusBar>
        </Sidebar>
        <Main>
          <TabStrip>
            <AddView aria-label="Add view"><Plus color="#2a7be8" /><Caret /></AddView>
          </TabStrip>
          <Work>
            <ChartPane>
              <ChartTools>
                <DataTip>Switch to data</DataTip>
                <ChartTool aria-label="Table"><TableIcon /></ChartTool>
                <ChartTool aria-label="Wavelength"><Lambda /></ChartTool>
                <Gap />
                <ChartTool aria-label="Curves"><LinesIcon /></ChartTool>
                <Divider $height={16} />
                <ChartTool aria-label="Grid"><GridIcon /></ChartTool>
                <ChartTool aria-label="Colors"><Wheel $size={15} $hole /></ChartTool>
                <Spacer />
                <Asterisk />
              </ChartTools>
              <SpectrumChart />
            </ChartPane>
            <Inspector>
              <InspectorHead><SectionTitle>SPECTRAL RESULTS</SectionTitle></InspectorHead>
              <Group>
                <legend>Centroid</legend>
                <GroupRow>
                  <label htmlFor="wavelength">Wavelength</label>
                  <Spin id="wavelength" value="380.00" />
                  <label htmlFor="window">Window</label>
                  <Spin id="window" value="4" />
                </GroupRow>
                <GroupRow>
                  <span>Centroid:</span>
                  <span />
                  <NoWrap><b>NA</b><Unit>nm.</Unit></NoWrap>
                </GroupRow>
              </Group>
              <Facts>
                <dt>Measurement:</dt><dd><b>NA</b></dd>
                <dt>Units:</dt><dd><b>NA</b></dd>
                <dt>Spectral range:</dt><dd><b>NA</b></dd>
                <dt>Peak:</dt><dd><b>NA</b><Unit>nm.</Unit></dd>
              </Facts>
            </Inspector>
          </Work>
          <ViewTabs>
            {Object.keys(viewIcons).map(name => (
              <ViewTab key={name} $on={name === 'Spectrum'}>{viewIcons[name]}{name}</ViewTab>
            ))}
          </ViewTabs>
          <StatusBar>
            <DockIcon />
            <Spacer />
            <DockIcon />
          </StatusBar>
        </Main>
      </Body>
    </Window>
  );
}
